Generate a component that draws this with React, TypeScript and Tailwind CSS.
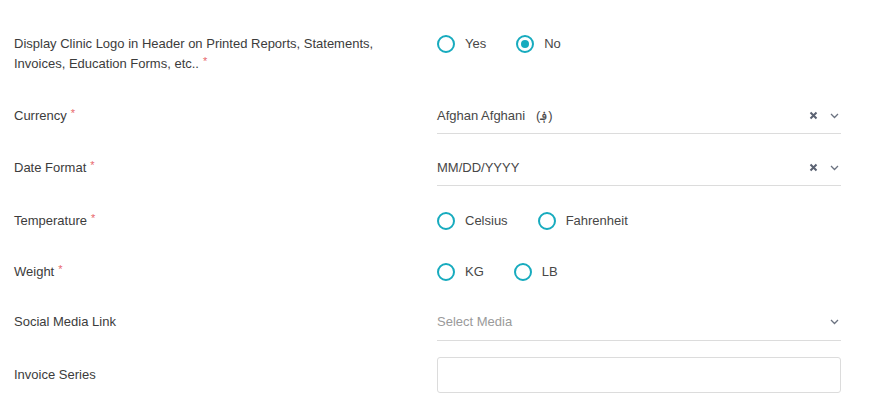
import React from "react";

const Req = () => <span className="text-[#e8676b] text-[11px] leading-[0] relative -top-[3px] ml-[4px]">*</span>;

function Radio({ label, checked }: { label: string; checked?: boolean }) {
  return (
    <div className="flex items-center">
      <span className="w-[18px] h-[18px] rounded-full border-2 border-[#17abbe] flex items-center justify-center">
        {checked && <span className="w-[8px] h-[8px] rounded-full bg-[#17abbe]" />}
      </span>
      <span className="ml-[10px] text-[13px] text-[#474747]">{label}</span>
    </div>
  );
}

const Chevron = () => (
  <svg width="9" height="6" viewBox="0 0 9 6" className="ml-[12px]">
    <path d="M1 1l3.5 3.5L8 1" fill="none" stroke="#6b7280" strokeWidth="1.3" />
  </svg>
);

const Cross = () => (
  <svg width="9" height="9" viewBox="0 0 9 9">
    <path d="M1.5 1.5l6 6M7.5 1.5l-6 6" stroke="#5b6272" strokeWidth="2" />
  </svg>
);

function Select({ value, placeholder, clear, h }: { value?: string; placeholder?: string; clear?: boolean; h: string }) {
  return (
    <div className={h + " border-b border-[#dcdcdc] flex items-center pr-[2px] pt-[1px]"}>
      <span className={"flex-1 whitespace-pre text-[13px] " + (value ? "text-[#474747]" : "text-[#9a9a9a]")}>{value ?? placeholder}</span>
      {clear && <Cross />}
      <Chevron />
    </div>
  );
}

function Row({ label, req, children, cls }: { label: React.ReactNode; req?: boolean; children: React.ReactNode; cls: string }) {
  return (
    <div className={"flex items-center " + cls}>
      <div className="w-[423px] text-[13px] leading-[20px] text-[#3c3c3c]">
        {label}
        {req && <Req />}
      </div>
      <div className="w-[404px]">{children}</div>
    </div>
  );
}

export default function App() {
  return (
    <div className="w-[880px] h-[403px] bg-white pl-[14px] pt-[34px] overflow-hidden" style={{ fontFamily: '"Liberation Sans", Arial, sans-serif' }}>
      <div className="flex items-start">
        <div className="w-[423px] text-[13px] leading-[20px] text-[#3c3c3c]">
          Display Clinic Logo in Header on Printed Reports, Statements,
          <br />
          Invoices, Education Forms, etc..
          <Req />
        </div>
        <div className="flex items-center gap-[30px] h-[20px]">
          <Radio label="Yes" />
          <Radio label="No" checked />
        </div>
      </div>
      <Row label="Currency" req cls="mt-[23px] h-[37px]">
        <Select value="Afghan Afghani   (؋)" clear h="h-[37px]" />
      </Row>
      <Row label="Date Format" req cls="mt-[15px] h-[37px]">
        <Select value="MM/DD/YYYY" clear h="h-[37px]" />
      </Row>
      <Row label="Temperature" req cls="mt-[16px] h-[38px]">
        <div className="flex items-center gap-[30px]">
          <Radio label="Celsius" />
          <Radio label="Fahrenheit" />
        </div>
      </Row>
      <Row label="Weight" req cls="mt-[13px] h-[38px]">
        <div className="flex items-center gap-[30px]">
          <Radio label="KG" />
          <Radio label="LB" />
        </div>
      </Row>
      <Row label="Social Media Link" cls="mt-[12px] h-[38px]">
        <Select placeholder="Select Media" h="h-[38px]" />
      </Row>
      <Row label="Invoice Series" cls="mt-[16px] h-[36px]">
        <div className="h-[36px] border border-[#dcdcdc] rounded-[3px]" />
      </Row>
    </div>
  );
}
